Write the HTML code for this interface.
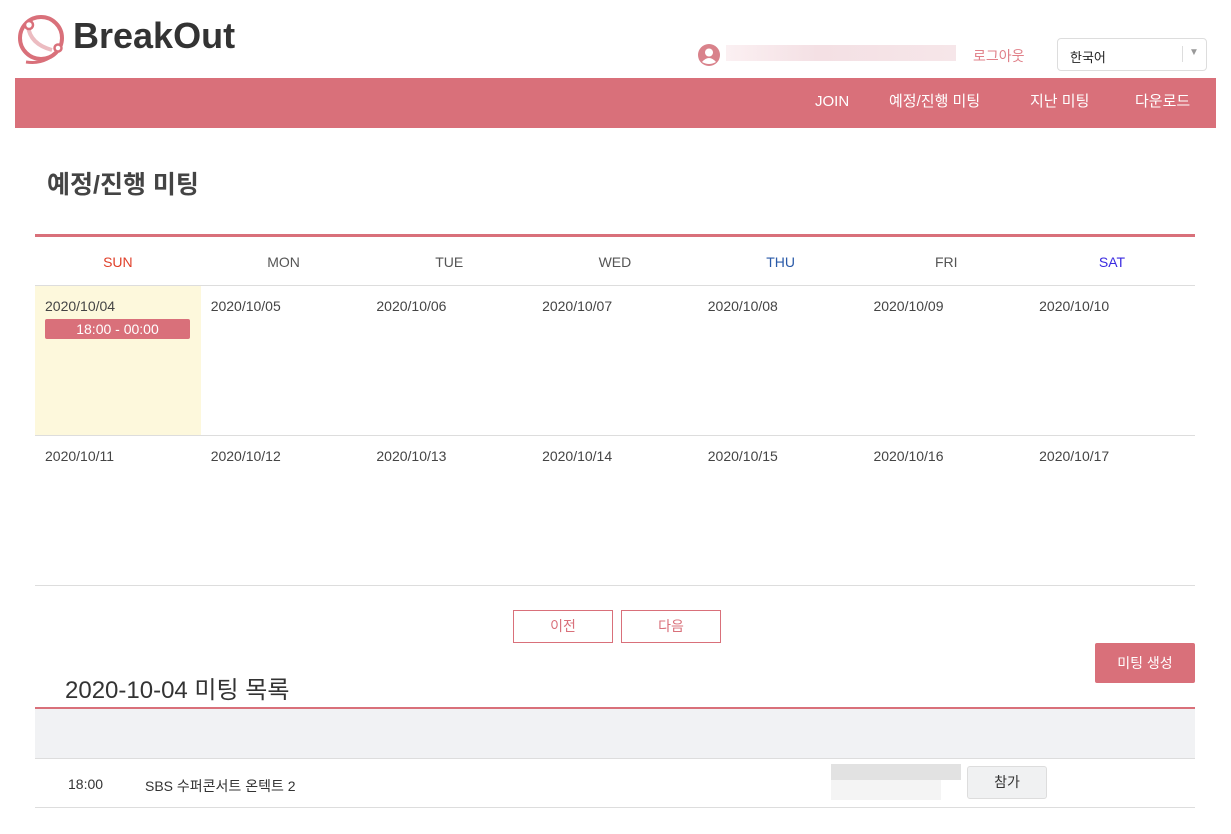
<!DOCTYPE html>
<html><head><meta charset="utf-8"><style>
*{margin:0;padding:0;box-sizing:border-box}
body{width:1231px;height:834px;background:#fff;font-family:"Liberation Sans","Noto Sans CJK KR",sans-serif;color:#333;position:relative;overflow:hidden}
.a{position:absolute}
.nav{left:15px;top:78px;width:1201px;height:50px;background:#d9707a}
.nav span{position:absolute;top:0;line-height:48px;color:#fff;font-size:15px}
.cal{left:35px;top:234px;width:1160px;border-top:3px solid #d9707a}
.hd{height:49px;border-bottom:1px solid #ddd;display:flex}
.hd div,.row div{width:165.7px}
.hd div{text-align:center;line-height:50px;font-size:14px;color:#555}
.row{height:150px;border-bottom:1px solid #ddd;display:flex}
.row div{padding:12px 10px;font-size:14px;color:#444}
.btn{border:1px solid #d9707a;color:#d9707a;font-size:14px;text-align:center;line-height:31px;height:33px;width:100px;background:#fff}
</style></head><body>
<svg class="a" style="left:14px;top:10px" width="54" height="56" viewBox="0 0 54 56">
<circle cx="27" cy="28" r="21" fill="none" stroke="#d9707a" stroke-width="4"/>
<path d="M14 16 Q16 34 38 40" fill="none" stroke="#ecbcc1" stroke-width="4"/>
<path d="M44 40 Q32 55 12 52" fill="none" stroke="#d9707a" stroke-width="3"/>
<circle cx="15" cy="15" r="4" fill="#fff" stroke="#d9707a" stroke-width="2.5"/>
<circle cx="44" cy="38" r="3.5" fill="#fff" stroke="#d9707a" stroke-width="2.5"/>
</svg>
<div class="a" style="left:73px;top:15px;font-size:36px;font-weight:bold;color:#333">BreakOut</div>
<svg class="a" style="left:698px;top:44px" width="22" height="22" viewBox="0 0 22 22"><circle cx="11" cy="11" r="11" fill="#d9828b"/><circle cx="11" cy="8.5" r="4" fill="#fff"/><path d="M4 18 Q11 10 18 18 Q11 22 4 18Z" fill="#fff"/></svg>
<div class="a" style="left:726px;top:45px;width:230px;height:16px;background:linear-gradient(90deg,#fbf0f2,#f4e0e4 40%,#f6e6e9)"></div>
<div class="a" style="left:973px;top:46px;font-size:14px;color:#e08089">로그아웃</div>
<div class="a" style="left:1057px;top:38px;width:150px;height:33px;border:1px solid #ddd;border-radius:4px"><span class="a" style="left:12px;top:8px;font-size:13px;color:#222">한국어</span><span class="a" style="left:124px;top:7px;height:16px;border-left:1px solid #ddd"></span><span class="a" style="left:131px;top:8px;font-size:10px;color:#999">▼</span></div>
<div class="a nav"><span style="left:800px">JOIN</span><span style="left:874px">예정/진행 미팅</span><span style="left:1015px">지난 미팅</span><span style="left:1120px">다운로드</span></div>
<div class="a" style="left:47px;top:165px;font-size:25px;font-weight:bold;color:#444">예정/진행 미팅</div>
<div class="a cal">
<div class="hd"><div style="color:#e0402a">SUN</div><div>MON</div><div>TUE</div><div>WED</div><div style="color:#2a5aa8">THU</div><div>FRI</div><div style="color:#3a2ae0">SAT</div></div>
<div class="row"><div style="background:#fdf8dc">2020/10/04<div style="width:145px;margin-top:5px;background:#d9707a;color:#fff;text-align:center;height:20px;line-height:20px;border-radius:2px;padding:0">18:00 - 00:00</div></div><div>2020/10/05</div><div>2020/10/06</div><div>2020/10/07</div><div>2020/10/08</div><div>2020/10/09</div><div>2020/10/10</div></div>
<div class="row"><div>2020/10/11</div><div>2020/10/12</div><div>2020/10/13</div><div>2020/10/14</div><div>2020/10/15</div><div>2020/10/16</div><div>2020/10/17</div></div>
</div>
<div class="a btn" style="left:513px;top:610px">이전</div>
<div class="a btn" style="left:621px;top:610px">다음</div>
<div class="a" style="left:1095px;top:643px;width:100px;height:40px;background:#d9707a;color:#fff;font-size:14px;text-align:center;line-height:40px;border-radius:2px">미팅 생성</div>
<div class="a" style="left:65px;top:670px;font-size:24px;color:#333">2020-10-04 미팅 목록</div>
<div class="a" style="left:35px;top:707px;width:1160px;height:52px;border-top:2px solid #d9707a;background:#f1f2f4;border-bottom:1px solid #ddd"></div>
<div class="a" style="left:35px;top:807px;width:1160px;border-top:1px solid #ddd"></div>
<div class="a" style="left:68px;top:776px;font-size:14px">18:00</div>
<div class="a" style="left:145px;top:776px;font-size:14px">SBS 수퍼콘서트 온텍트 2</div>
<div class="a" style="left:831px;top:764px;width:130px;height:16px;background:#e2e2e2"></div>
<div class="a" style="left:831px;top:780px;width:110px;height:20px;background:#f4f4f4"></div>
<div class="a" style="left:967px;top:766px;width:80px;height:33px;background:#f0f1f2;border:1px solid #ddd;border-radius:3px;text-align:center;line-height:31px;font-size:14px">참가</div>
</body></html>
